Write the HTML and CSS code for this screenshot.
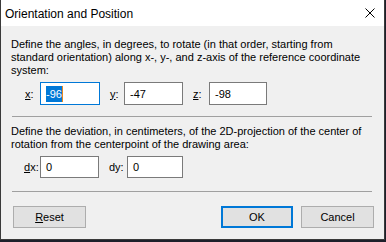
FILE: index.html
```html
<!DOCTYPE html>
<html>
<head>
<meta charset="utf-8">
<link rel="stylesheet" href="styles.css">
</head>
<body>
<div class="window">
  <div class="titlebar">
    <span class="title">Orientation and Position</span>
    <svg class="close" width="10" height="10" viewBox="0 0 10 10"><path d="M0.5 0.5L9.5 9.5M9.5 0.5L0.5 9.5" stroke="#000" stroke-width="1"/></svg>
  </div>
  <div class="content">
    <p class="para p1">Define the angles, in degrees, to rotate (in that order, starting from standard orientation) along x-, y-, and z-axis of the reference coordinate system:</p>
    <div class="row r1">
      <span class="lbl lx"><u>x</u>:</span>
      <div class="field focus fx"><span class="sel">-96</span><span class="caret"></span></div>
      <span class="lbl ly"><u>y</u>:</span>
      <div class="field fy">-47</div>
      <span class="lbl lz"><u>z</u>:</span>
      <div class="field fz">-98</div>
    </div>
    <div class="sep s1"></div>
    <p class="para p2">Define the deviation, in centimeters, of the 2D-projection of the center of rotation from the centerpoint of the drawing area:</p>
    <div class="row r2">
      <span class="lbl ldx"><u>d</u>x:</span>
      <div class="field fdx">0</div>
      <span class="lbl ldy">dy:</span>
      <div class="field fdy">0</div>
    </div>
    <div class="sep s2"></div>
    <div class="buttons">
      <div class="btn reset"><u>R</u>eset</div>
      <div class="spacer"></div>
      <div class="btn default">OK</div>
      <div class="btn cancel">Cancel</div>
    </div>
  </div>
</div>
</body>
</html>
```
FILE: styles.css
```css
html, body {
  margin: 0;
  padding: 0;
}
body {
  width: 386px;
  height: 242px;
  background: #1d1f2a;
  overflow: hidden;
  font-family: "Liberation Sans", Arial, sans-serif;
  font-size: 11px;
  color: #000;
}
.window {
  width: 383px;
  height: 239px;
  background: #f0f0f0;
  border: 1px solid #3a3a3a;
  border-top: none;
  display: flex;
  flex-direction: column;
}
.titlebar {
  height: 26px;
  background: #ffffff;
  display: flex;
  align-items: center;
  flex-shrink: 0;
}
.title {
  font-size: 12px;
  padding-left: 4px;
  padding-top: 1px;
}
.close {
  margin-left: auto;
  margin-right: 9px;
}
.content {
  padding: 12px 10px 0 10px;
  display: flex;
  flex-direction: column;
}
.para {
  margin: 0;
  line-height: 13px;
}
.row {
  display: flex;
  align-items: center;
}
.r1 {
  margin-top: 5px;
  height: 23px;
}
.field {
  box-sizing: border-box;
  height: 23px;
  background: #fff;
  border: 1px solid #7a7a7a;
  padding-left: 5px;
  display: flex;
  align-items: center;
  flex-shrink: 0;
}
.field.focus {
  border-color: #0078d7;
}
.sel {
  background: #0078d7;
  color: #fff;
  line-height: 16px;
}
.caret {
  display: inline-block;
  width: 1px;
  height: 16px;
  background: #e8891d;
}
.lbl {
  flex-shrink: 0;
}
.lx { margin-left: 14px; width: 15px; }
.fx { width: 60px; }
.ly { margin-left: 10px; width: 14px; }
.fy { width: 59px; }
.lz { margin-left: 10px; width: 16px; }
.fz { width: 58px; }
.sep {
  height: 1px;
  background: #a0a0a0;
  margin-right: 2px;
  margin-left: 1px;
}
.s1 { margin-top: 11px; }
.p2 { margin-top: 8px; }
.r2 { margin-top: 5px; height: 22px; }
.ldx { margin-left: 13px; width: 16px; }
.fdx { width: 59px; height: 22px; }
.ldy { margin-left: 10px; width: 18px; }
.fdy { width: 56px; height: 22px; }
.s2 { margin-top: 13px; }
.buttons {
  display: flex;
  margin-top: 14px;
  padding-left: 2px;
}
.spacer { flex: 1; }
.btn {
  box-sizing: border-box;
  height: 22px;
  background: #e1e1e1;
  border: 1px solid #adadad;
  display: flex;
  align-items: center;
  justify-content: center;
  flex-shrink: 0;
}
.reset { width: 73px; }
.btn.default {
  width: 72px;
  border: 2px solid #0078d7;
  margin-right: 8px;
}
.cancel { width: 73px; }
```
